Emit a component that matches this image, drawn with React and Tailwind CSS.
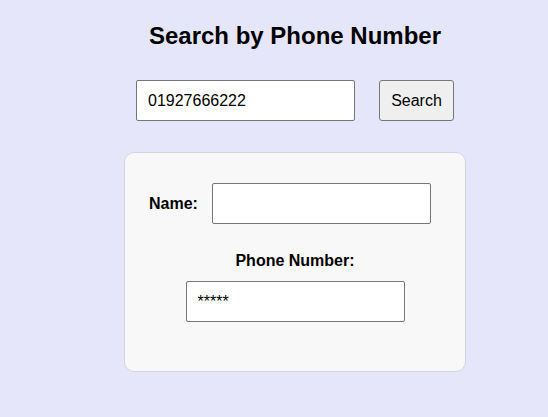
import React from 'react';

// Campo de texto simples
const Campo = ({ value, className }) => (
  <input
    type="text"
    defaultValue={value}
    className={`h-[41px] w-[219px] rounded-[2px] border border-[#767676] bg-white px-[11px] text-[16px] text-black outline-none ${className || ''}`}
  />
);

function App() {
  return (
    <div className="min-h-screen bg-[#e6e6fa] pl-[42px] font-['Liberation_Sans',Arial,sans-serif] text-black">
      <div className="flex flex-col items-center pt-[22px]">
        <h1 className="text-[24px] font-bold leading-[28px]">Search by Phone Number</h1>

        {/* Busca */}
        <div className="mt-[30px] flex items-center gap-[24px]">
          <Campo value="01927666222" />
          <button className="h-[41px] w-[75px] rounded-[3px] border border-[#767676] bg-[#efefef] text-[16px] text-black">
            Search
          </button>
        </div>

        {/* Resultado */}
        <div className="mt-[31px] w-[342px] rounded-[10px] border border-[#d4d4dc] bg-[#f8f8f8] pb-[49px] pt-[30px]">
          <div className="flex items-center pl-[24px]">
            <label className="text-[16px] font-bold">Name:</label>
            <Campo value="" className="ml-[14px]" />
          </div>
          <div className="mt-[28px] flex flex-col items-center">
            <label className="text-[16px] font-bold leading-[18px]">Phone Number:</label>
            <Campo value="*****" className="mt-[11px] text-[#222]" />
          </div>
        </div>
      </div>
    </div>
  );
}

export default App;
